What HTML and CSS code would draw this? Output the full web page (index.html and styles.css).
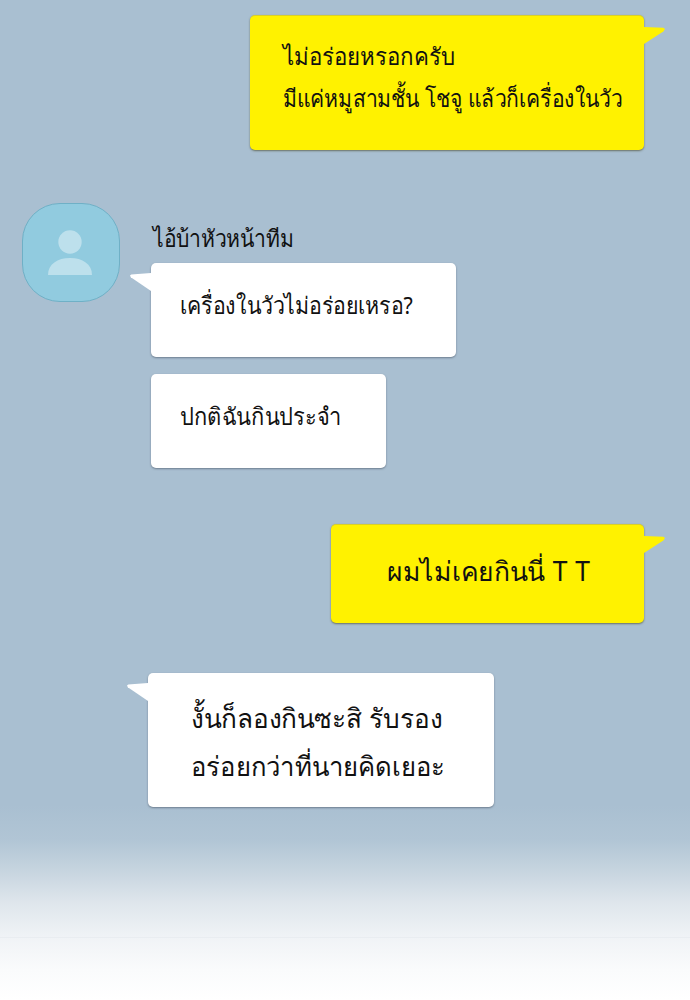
FILE: index.html
```html
<!DOCTYPE html>
<html>
    <head>
        <title>Chat</title>
        <meta charset="utf-8"/>
        <link rel="stylesheet" href="styles.css">
    </head>
    <body>
        <main class="chat">
            <div class="row row-me row-first">
                <div class="bubble bubble-me bubble-big">
                    <p class="sx-93">ไม่อร่อยหรอกครับ</p>
                    <p class="sx-88">มีแค่หมูสามชั้น โชจู แล้วก็เครื่องในวัว</p>
                </div>
            </div>

            <div class="row row-them">
                <div class="avatar">
                    <svg width="98" height="98" viewBox="0 0 98 98">
                        <circle cx="48" cy="38" r="11.700" fill="#bde0ec"/>
                        <path d="M26 71 C26 60 35.500 54 48 54 C60.500 54 70 60 70 71 Z" fill="#bde0ec"/>
                    </svg>
                </div>
                <div class="stack">
                    <div class="name"><p class="sx-88">ไอ้บ้าหัวหน้าทีม</p></div>
                    <div class="bubble bubble-them bubble-small bubble-q">
                        <p class="sx-89">เครื่องในวัวไม่อร่อยเหรอ?</p>
                    </div>
                    <div class="bubble bubble-plain bubble-small bubble-usual">
                        <p class="sx-91">ปกติฉันกินประจำ</p>
                    </div>
                </div>
            </div>

            <div class="row row-me row-third">
                <div class="bubble bubble-me bubble-tt">
                    <p class="sx-98">ผมไม่เคยกินนี่ T T</p>
                </div>
            </div>

            <div class="row row-last">
                <div class="bubble bubble-them bubble-reply">
                    <p class="sx-97">งั้นก็ลองกินซะสิ รับรอง</p>
                    <p class="sx-95">อร่อยกว่าที่นายคิดเยอะ</p>
                </div>
            </div>
        </main>
    </body>
</html>
```

FILE: styles.css
```css
* {
    box-sizing: border-box;
}
html, body {
    margin: 0;
    padding: 0;
}
body {
    height: 1000px;
    overflow: hidden;
    color: #111;
    font-family: 'Noto Sans', 'DejaVu Sans', sans-serif;
    background:
        linear-gradient(#e9edf1, #e9edf1) 0 937px / 100% 1px no-repeat,
        linear-gradient(#a9bfd1 0, #a9bfd1 805px, #b1c5d5 840px, #c6d4df 870px, #dfe6ec 903px, #f0f3f6 937px, #fafbfc 970px, #fff 1000px);
}
p {
    margin: 0;
    transform-origin: left center;
}

/* the lettering in the picture is narrower than the installed font */
.sx-88 { transform: scaleX(0.88); }
.sx-89 { transform: scaleX(0.89); }
.sx-91 { transform: scaleX(0.91); }
.sx-93 { transform: scaleX(0.93); }
.sx-95 { transform: scaleX(0.95); }
.sx-97 { transform: scaleX(0.97); }
.sx-98 { transform: scaleX(0.98); }

.chat {
    padding-top: 15px;
}
.row {
    display: flex;
}
.row-me {
    justify-content: flex-end;
    padding-right: 46px;
}
.row-them {
    margin-top: 53px;
    padding-left: 22px;
}
.row-third {
    margin-top: 56px;
}
.row-last {
    margin-top: 50px;
    padding-left: 148px;
}

.bubble {
    position: relative;
    border-radius: 5px;
    font-size: 24px;
    line-height: 42px;
    white-space: nowrap;
}
.bubble-me {
    background: #fff200;
    border-top: 1px solid #d8cf2a;
    box-shadow: 0 1px 2px rgba(70, 70, 40, 0.65);
}
.bubble-them, .bubble-plain {
    background: #fff;
    box-shadow: 0 1px 2px rgba(50, 60, 75, 0.5);
}

/* tails */
.bubble-me::after, .bubble-them::after {
    content: "";
    position: absolute;
    width: 21px;
}
.bubble-me::after {
    top: 11px;
    left: 100%;
    height: 17px;
    background: #fff200;
    clip-path: polygon(0 0, 92% 4%, 100% 12%, 92% 26%, 0 100%);
}
.bubble-them::after {
    top: 10px;
    right: 100%;
    height: 18px;
    background: #fff;
    clip-path: polygon(100% 0, 100% 100%, 4% 24%, 0 14%, 6% 8%);
}

.bubble-big {
    width: 394px;
    height: 135px;
    padding: 19px 0 0 33px;
}
.bubble-tt {
    width: 313px;
    height: 99px;
    padding: 25px 0 0 56px;
    font-size: 27px;
    word-spacing: 1px;
}
.bubble-small {
    width: 305px;
    height: 94px;
    padding: 21px 0 0 29px;
}
.bubble-usual {
    width: 235px;
    margin-top: 17px;
}
.bubble-reply {
    width: 346px;
    height: 134px;
    padding: 21px 0 0 43px;
    font-size: 27px;
    line-height: 48px;
}

.avatar {
    width: 98px;
    height: 99px;
    flex: none;
    background: #91cbdf;
    border: 1px solid #6fb0c6;
    border-radius: 38px;
    overflow: hidden;
}
.avatar svg {
    display: block;
    margin: 0 -1px;
}
.stack {
    margin-left: 31px;
    padding-top: 18px;
}
.name {
    height: 42px;
    margin-left: 2px;
    font-size: 24px;
    line-height: 34px;
    white-space: nowrap;
}
```
